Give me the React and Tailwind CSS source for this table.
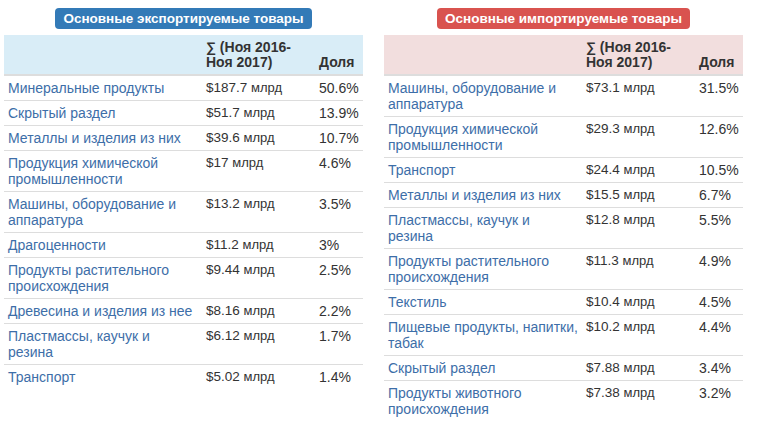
const exportsData = [
  [["Минеральные продукты"], "$187.7", "50.6%"],
  [["Скрытый раздел"], "$51.7", "13.9%"],
  [["Металлы и изделия из них"], "$39.6", "10.7%"],
  [["Продукция химической", "промышленности"], "$17", "4.6%"],
  [["Машины, оборудование и", "аппаратура"], "$13.2", "3.5%"],
  [["Драгоценности"], "$11.2", "3%"],
  [["Продукты растительного", "происхождения"], "$9.44", "2.5%"],
  [["Древесина и изделия из нее"], "$8.16", "2.2%"],
  [["Пластмассы, каучук и", "резина"], "$6.12", "1.7%"],
  [["Транспорт"], "$5.02", "1.4%"],
];

const importsData = [
  [["Машины, оборудование и", "аппаратура"], "$73.1", "31.5%"],
  [["Продукция химической", "промышленности"], "$29.3", "12.6%"],
  [["Транспорт"], "$24.4", "10.5%"],
  [["Металлы и изделия из них"], "$15.5", "6.7%"],
  [["Пластмассы, каучук и", "резина"], "$12.8", "5.5%"],
  [["Продукты растительного", "происхождения"], "$11.3", "4.9%"],
  [["Текстиль"], "$10.4", "4.5%"],
  [["Пищевые продукты, напитки,", "табак"], "$10.2", "4.4%"],
  [["Скрытый раздел"], "$7.88", "3.4%"],
  [["Продукты животного", "происхождения"], "$7.38", "3.2%"],
];

function Panel({ title, badgeClass, headClass, rows }) {
  return (
    <div className="flex flex-col items-center w-[359px]">
      <div
        className={`h-[21px] px-[8px] rounded-[4px] text-white font-bold text-[13.5px] leading-[21px] ${badgeClass}`}
      >
        {title}
      </div>
      <table className="mt-[6px] w-[359px] table-fixed border-collapse text-[14px]">
        <colgroup>
          <col className="w-[198px]" />
          <col className="w-[113px]" />
          <col className="w-[48px]" />
        </colgroup>
        <thead>
          <tr className={`${headClass} border-b-2 border-[#dddddd]`}>
            <th className="px-[4px] pt-[5px] pb-[4px]"></th>
            <th className="px-[4px] pt-[5px] pb-[4px] text-left align-bottom font-bold leading-[15px] text-[#333333]">
              ∑ (Ноя 2016-
              <br />
              Ноя 2017)
            </th>
            <th className="px-[4px] pt-[5px] pb-[4px] text-left align-bottom font-bold leading-[15px] text-[#333333]">
              Доля
            </th>
          </tr>
        </thead>
        <tbody>
          {rows.map(([lines, val, pct], i) => (
            <tr
              key={i}
              className={i < rows.length - 1 ? "border-b border-[#dddddd]" : ""}
            >
              <td className="pl-[4px] pr-[2px] py-[4px] align-top leading-[16px] text-[#3d6ea8]">
                {lines.map((l, j) => (
                  <div key={j} className="whitespace-nowrap">
                    {l}
                  </div>
                ))}
              </td>
              <td className="px-[4px] py-[4px] align-top leading-[16px] text-[13.5px] text-[#333333] whitespace-nowrap">
                {val} <span className="text-[13px]">млрд</span>
              </td>
              <td className="px-[4px] py-[4px] align-top leading-[16px] text-[#333333]">
                {pct}
              </td>
            </tr>
          ))}
        </tbody>
      </table>
    </div>
  );
}

export default function App() {
  return (
    <div
      className="w-[757px] h-[431px] bg-white flex gap-[21px] pl-[4px] pt-[8px]"
      style={{ fontFamily: '"Liberation Sans", Arial, sans-serif' }}
    >
      <Panel
        title="Основные экспортируемые товары"
        badgeClass="bg-[#337ab7]"
        headClass="bg-[#d9edf7]"
        rows={exportsData}
      />
      <Panel
        title="Основные импортируемые товары"
        badgeClass="bg-[#d9534f]"
        headClass="bg-[#f2dede]"
        rows={importsData}
      />
    </div>
  );
}
